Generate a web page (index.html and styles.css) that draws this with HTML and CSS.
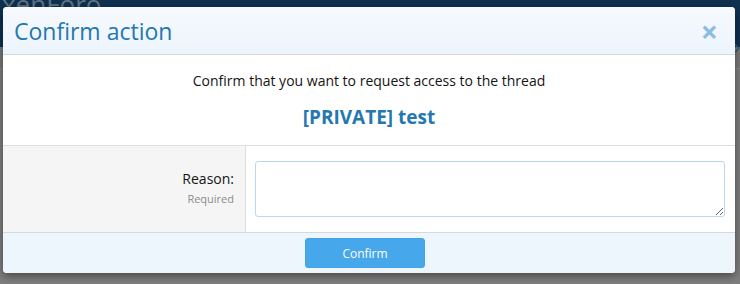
FILE: index.html
```html
<!DOCTYPE html>
<html lang="en">
<head>
  <meta charset="UTF-8">
  <title>Confirm action</title>
  <link rel="stylesheet" href="styles.css">
</head>
<body>

  <div class="page-header">
    <span class="logo">xenForo</span>
    <span class="nav-arrow">&rsaquo;</span>
  </div>
  <div class="page-line"></div>

  <div class="overlay">
    <div class="overlay-title">
      <span>Confirm action</span>
      <span class="overlay-close">&times;</span>
    </div>

    <div class="block-body">
      <div class="block-row">Confirm that you want to request access to the thread</div>
      <div class="thread-title">[PRIVATE] test</div>
    </div>

    <div class="form-row">
      <div class="form-label">
        <div class="label">Reason:</div>
        <div class="hint">Required</div>
      </div>
      <div class="form-input">
        <textarea class="input"></textarea>
      </div>
    </div>

    <div class="form-submit">
      <button class="button">Confirm</button>
    </div>
  </div>

</body>
</html>
```

FILE: styles.css
```css
body {
  margin: 0;
  font-family: 'Open Sans', 'Noto Sans', sans-serif;
  background-color: #7f7f7f;
  height: 284px;
  overflow: hidden;
  position: relative;
}
.page-header {
  height: 47px;
  background-color: #0f3150;
  position: relative;
}
.logo {
  position: absolute;
  left: 2px;
  top: -14px;
  font-size: 26px;
  color: #5f7487;
}
.nav-arrow {
  position: absolute;
  right: 0;
  top: 34px;
  font-size: 22px;
  line-height: 22px;
  color: #2a5f8c;
}
.page-line {
  height: 21px;
  border-bottom: 1px solid #8a8a8a;
  background-color: #7a7a7a;
}
.overlay {
  position: absolute;
  left: 3px;
  top: 7px;
  width: 732px;
  background-color: #fff;
  border-radius: 4px;
  overflow: hidden;
  box-shadow: 0 3px 10px rgba(0, 0, 0, 0.45);
}
.overlay-title {
  height: 47px;
  display: flex;
  align-items: center;
  justify-content: space-between;
  padding: 0 17px 0 11px;
  background: linear-gradient(to bottom, #f7fafe, #ecf4fc);
  border-bottom: 1px solid #d8d8d8;
  font-size: 23px;
  color: #2577b1;
}
.overlay-close {
  font-size: 30px;
  color: #8bbde3;
  font-weight: bold;
  margin-top: 1px;
}
.block-body {
  height: 90px;
  border-bottom: 1px solid #dfdfdf;
  text-align: center;
}
.block-row {
  padding-top: 16px;
  font-size: 14px;
  color: #141414;
}
.thread-title {
  margin-top: 14px;
  font-size: 19px;
  font-weight: bold;
  color: #2577b1;
}
.form-row {
  display: flex;
  height: 86px;
  border-bottom: 1px solid #d8d8d8;
}
.form-label {
  width: 231px;
  padding: 23px 11px 0 0;
  background-color: #f5f5f5;
  border-right: 1px solid #dfdfdf;
  text-align: right;
}
.label {
  font-size: 14px;
  color: #141414;
}
.hint {
  font-size: 11px;
  color: #8c8c8c;
  margin-top: 3px;
}
.form-input {
  flex: 1;
  padding: 15px 10px 0 9px;
}
.input {
  display: block;
  box-sizing: border-box;
  width: 100%;
  height: 56px;
  border: 1px solid #b9d9f0;
  border-radius: 3px;
  background-color: #fff;
}
.form-submit {
  display: flex;
  justify-content: center;
  padding: 5px 8px 5px 0;
  background-color: #edf5fd;
}
.button {
  width: 120px;
  height: 30px;
  background-color: #47a7eb;
  border: 1px solid #43a2e6;
  border-radius: 3px;
  color: #fff;
  font-family: 'Open Sans', 'Noto Sans', sans-serif;
  font-size: 12px;
}
```
